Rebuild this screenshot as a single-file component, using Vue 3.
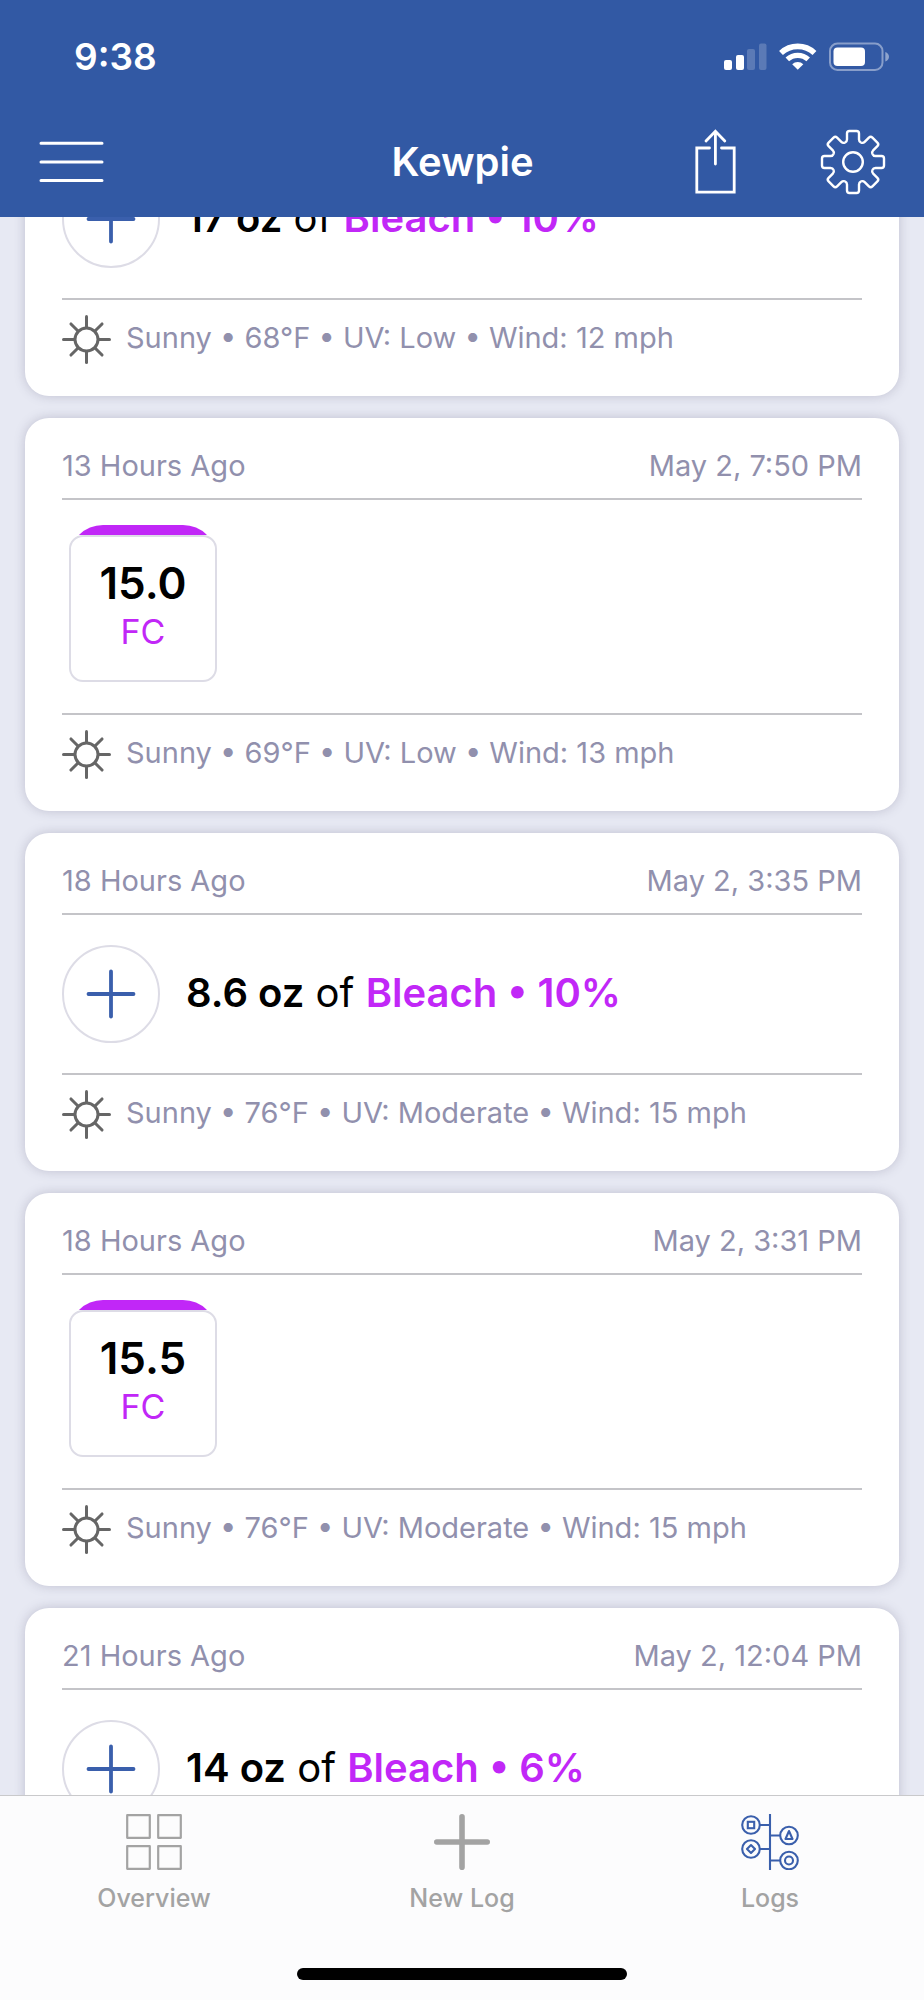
<script setup>
import { onMounted, ref } from 'vue'

const logs = [
  {
    type: 'addition',
    amount: '17 oz',
    product: 'Bleach • 10%',
    weather: 'Sunny • 68°F • UV: Low • Wind: 12 mph'
  },
  {
    ago: '13 Hours Ago',
    date: 'May 2, 7:50 PM',
    type: 'reading',
    value: '15.0',
    unit: 'FC',
    weather: 'Sunny • 69°F • UV: Low • Wind: 13 mph'
  },
  {
    ago: '18 Hours Ago',
    date: 'May 2, 3:35 PM',
    type: 'addition',
    amount: '8.6 oz',
    product: 'Bleach • 10%',
    weather: 'Sunny • 76°F • UV: Moderate • Wind: 15 mph'
  },
  {
    ago: '18 Hours Ago',
    date: 'May 2, 3:31 PM',
    type: 'reading',
    value: '15.5',
    unit: 'FC',
    weather: 'Sunny • 76°F • UV: Moderate • Wind: 15 mph'
  },
  {
    ago: '21 Hours Ago',
    date: 'May 2, 12:04 PM',
    type: 'addition',
    amount: '14 oz',
    product: 'Bleach • 6%'
  }
]

const turns = [0, 45, 90, 135, 180, 225, 270, 315]
const scroller = ref(null)

onMounted(() => {
  scroller.value.scrollTop = 77
})
</script>

<template>
  <div class="app">
    <header class="top">
      <div class="status">
        <span class="time">9:38</span>
        <div class="indicators">
          <svg width="43" height="30" viewBox="0 0 43 30" fill="#fff" aria-hidden="true">
            <rect x="0" y="19" width="8" height="10" rx="2" />
            <rect x="12" y="14" width="8" height="15" rx="2" />
            <rect x="23" y="8" width="8" height="21" rx="2" opacity=".2" />
            <rect x="35" y="2.500" width="7.500" height="26.500" rx="2" opacity=".2" />
          </svg>
          <svg width="38" height="30" viewBox="0 0 38 30" fill="none" stroke="#fff" aria-hidden="true">
            <path d="M2 12 A24.500 24.500 0 0 1 35.500 12" stroke-width="5.600" />
            <path d="M8.300 18.400 A15.400 15.400 0 0 1 29.200 18.400" stroke-width="5.200" />
            <path d="M18.750 28.800 L13.200 23.200 A8 8 0 0 1 24.300 23.200 Z" fill="#fff" stroke="none" />
          </svg>
          <svg width="61" height="30" viewBox="0 0 61 30" aria-hidden="true">
            <rect x="1" y="2.500" width="52.500" height="26.500" rx="7.500" fill="none" stroke="#fff" stroke-opacity=".42" stroke-width="2" />
            <rect x="4.500" y="6.500" width="31.500" height="18.500" rx="4" fill="#fff" />
            <path d="M56.300 11 Q60 12.500 60 15.700 Q60 19 56.300 20.500 Z" fill="#fff" opacity=".45" />
          </svg>
        </div>
      </div>
      <div class="nav">
        <button class="icon-btn" aria-label="Menu">
          <svg width="65" height="42" viewBox="0 0 65 42" stroke="#fff" stroke-width="3" stroke-linecap="round">
            <path d="M2 2.300 H63 M2 20.900 H63 M2 39.600 H63" />
          </svg>
        </button>
        <h1>Kewpie</h1>
        <div class="actions">
          <button class="icon-btn" aria-label="Share">
            <svg width="41" height="66" viewBox="0 0 41 66" fill="none" stroke="#fff" stroke-width="2.800" stroke-linecap="round">
              <path d="M14.500 19 H1.800 V63.200 H39.200 V19 H26.500" />
              <path d="M20.400 35 V2.500 M11 12 L20.400 2.300 L29.800 12" />
            </svg>
          </button>
          <button class="icon-btn" aria-label="Settings">
            <svg width="66" height="66" viewBox="-33 -33 66 66" fill="none" stroke="#fff" stroke-width="2.400">
              <path
                v-for="t in turns"
                :key="t"
                :transform="`rotate(${t})`"
                d="M-8.040 -19.400 Q-6 -20.300 -6 -22.500 V-28.500 Q-6 -31 -3.500 -31 H3.500 Q6 -31 6 -28.500 V-22.500 Q6 -20.300 8.040 -19.400"
              />
              <circle r="9.800" />
            </svg>
          </button>
        </div>
      </div>
    </header>

    <main ref="scroller" class="scroller">
      <article v-for="(log, i) in logs" :key="i" class="card">
        <div v-if="log.ago" class="head">
          <span>{{ log.ago }}</span>
          <time>{{ log.date }}</time>
        </div>
        <div class="body" :class="{ ruled: log.ago }">
          <div v-if="log.type === 'addition'" class="addition">
            <svg width="98" height="98" viewBox="0 0 98 98" fill="none" aria-hidden="true">
              <circle cx="49" cy="49" r="48" stroke="#dddce6" stroke-width="2" />
              <path d="M26.500 49 H71.500 M49 26.500 V71.500" stroke="#3a5fac" stroke-width="3.800" stroke-linecap="round" />
            </svg>
            <p><b>{{ log.amount }}</b> of <b class="product">{{ log.product }}</b></p>
          </div>
          <div v-else class="reading">
            <div class="tile">
              <b>{{ log.value }}</b>
              <span>{{ log.unit }}</span>
            </div>
          </div>
        </div>
        <div class="foot">
          <template v-if="log.weather">
            <svg width="49" height="49" viewBox="-24.500 -24.500 49 49" fill="none" stroke="#666" stroke-width="3" stroke-linecap="round" aria-hidden="true">
              <circle r="11.500" />
              <path v-for="t in turns" :key="t" :transform="`rotate(${t})`" :d="t % 90 ? 'M0 -12 V-22' : 'M0 -12 V-23'" />
            </svg>
            <span>{{ log.weather }}</span>
          </template>
        </div>
      </article>
    </main>

    <footer class="bottom">
      <nav class="tabs">
        <button class="tab">
          <svg width="56" height="56" viewBox="0 0 56 56" fill="none" stroke="#a3a3a3" stroke-width="2.200" stroke-linejoin="round">
            <rect x="1.200" y="1.200" width="22.600" height="22.600" />
            <rect x="32.200" y="1.200" width="22.600" height="22.600" />
            <rect x="1.200" y="32.200" width="22.600" height="22.600" />
            <rect x="32.200" y="32.200" width="22.600" height="22.600" />
          </svg>
          <span>Overview</span>
        </button>
        <button class="tab">
          <svg width="56" height="56" viewBox="0 0 56 56" stroke="#a3a3a3" stroke-width="5.600" stroke-linecap="round">
            <path d="M2.800 28 H53.200 M28 2.800 V53.200" />
          </svg>
          <span>New Log</span>
        </button>
        <button class="tab">
          <svg width="58" height="56" viewBox="0 0 58 56" fill="none" stroke="#3a5fac" stroke-width="2.100">
            <path d="M29 0 V56 M19 11 H29 M19 35 H29 M29 21.500 H39 M29 46.500 H39" />
            <circle cx="10" cy="11" r="8.800" />
            <circle cx="10" cy="35" r="8.800" />
            <circle cx="48" cy="21.500" r="8.800" />
            <circle cx="48" cy="46.500" r="8.800" />
            <rect x="6.800" y="7.800" width="6.400" height="6.400" />
            <path d="M10 31 L14 35 L10 39 L6 35 Z M48 17 L51.500 25 H44.500 Z" stroke-linejoin="round" />
            <circle cx="48" cy="46.500" r="4" />
          </svg>
          <span>Logs</span>
        </button>
      </nav>
      <div class="home"></div>
    </footer>
  </div>
</template>

<style>
body {
  background: #e7e9f3;
}
</style>

<style scoped>
.app {
  display: flex;
  flex-direction: column;
  height: 100vh;
  font-family: Inter, "Liberation Sans", sans-serif;
  background: #e7e9f3;
  color: #000;
}

svg {
  display: block;
  flex: none;
}

button {
  margin: 0;
  padding: 0;
  border: 0;
  background: none;
  font: inherit;
  color: inherit;
}

.top {
  flex: none;
  padding-bottom: 5px;
  background: #3259a4;
  color: #fff;
}

.status {
  display: flex;
  align-items: center;
  justify-content: space-between;
  height: 112px;
  padding: 0 34px 0 74px;
}

.time {
  font-size: 37px;
  font-weight: 600;
}

.indicators {
  display: flex;
  gap: 12px;
}

.nav {
  display: grid;
  grid-template-columns: 1fr auto 1fr;
  align-items: center;
  height: 100px;
  padding: 0 38px 0 39px;
}

.nav h1 {
  margin: 0;
  font-size: 40px;
  font-weight: 600;
  line-height: 50px;
}

.icon-btn {
  justify-self: start;
}

.actions {
  display: flex;
  justify-content: flex-end;
  gap: 84px;
}

.scroller {
  flex: 1;
  min-height: 0;
  overflow-y: auto;
  scrollbar-width: none;
}

.card {
  margin: 0 25px 22px;
  padding: 0 37px;
  border-radius: 24px;
  background: #fff;
  box-shadow: 0 0 11px rgba(90, 85, 120, 0.28);
}

.head {
  display: flex;
  align-items: center;
  justify-content: space-between;
  box-sizing: border-box;
  height: 80px;
  padding-top: 15px;
}

.head,
.foot {
  font-size: 29px;
  color: #9190ad;
}

.body {
  border-bottom: 2px solid #c4c4c8;
}

.ruled {
  border-top: 2px solid #c4c4c8;
}

.addition {
  display: flex;
  align-items: center;
  gap: 26px;
  padding: 30px 0;
}

.addition p {
  margin: 0;
  padding-bottom: 2px;
  font-size: 40px;
  line-height: 50px;
}

.addition b,
.tile b {
  font-weight: 600;
}

.addition .product {
  color: #c127f7;
}

.reading {
  width: 148px;
  margin: 25px 7px 31px;
  padding-top: 10px;
  border-radius: 34px 34px 0 0;
  background: linear-gradient(#c127f7 10px, transparent 10px);
}

.tile {
  display: flex;
  flex-direction: column;
  align-items: center;
  box-sizing: border-box;
  height: 147px;
  padding-top: 18px;
  border: 2px solid #dddce6;
  border-radius: 14px;
  background: #fff;
}

.tile b {
  font-size: 44px;
  line-height: 56px;
}

.tile span {
  font-size: 34px;
  line-height: 42px;
  color: #c127f7;
}

.foot {
  display: flex;
  align-items: flex-start;
  gap: 15px;
  box-sizing: border-box;
  height: 96px;
  padding-top: 15px;
  line-height: 46px;
}

.bottom {
  flex: none;
  border-top: 1px solid #c9c9cb;
  background: #fcfcfd;
}

.tabs {
  display: grid;
  grid-template-columns: repeat(3, 1fr);
  padding: 18px 0 54px;
}

.tab {
  display: flex;
  flex-direction: column;
  align-items: center;
  gap: 12px;
  font-size: 25px;
  font-weight: 500;
  line-height: 32px;
  color: #a3a3a3;
}

.home {
  width: 330px;
  height: 12px;
  margin: 0 auto 20px;
  border-radius: 6px;
  background: #000;
}
</style>
